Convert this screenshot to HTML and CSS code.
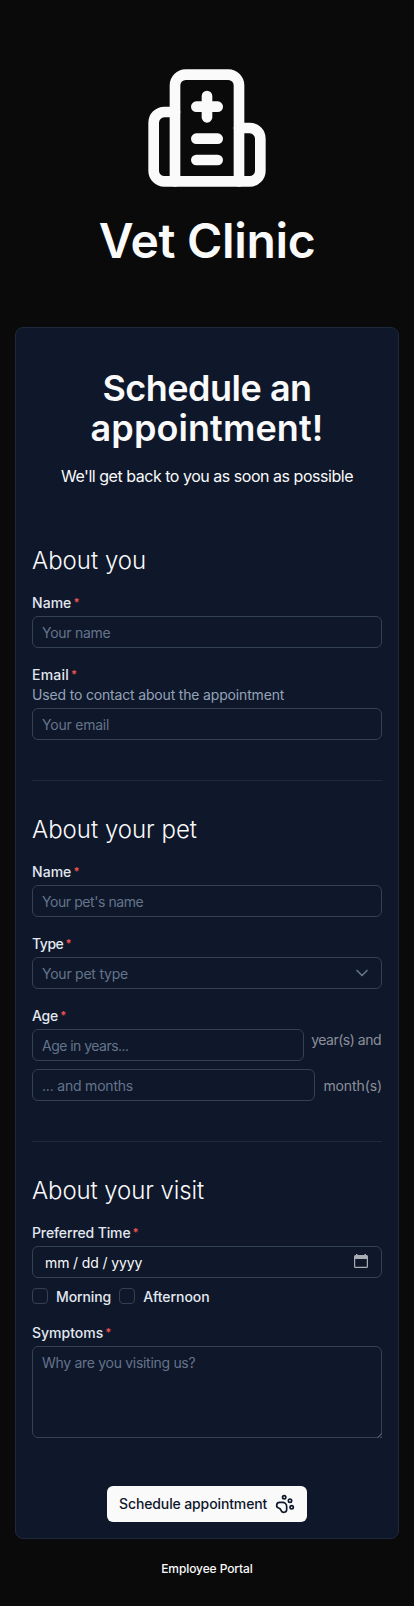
FILE: index.html
```html
<!DOCTYPE html>
<html lang="en">
<head>
<meta charset="utf-8">
<meta name="viewport" content="width=device-width, initial-scale=1">
<title>Vet Clinic</title>
<link rel="stylesheet" href="styles.css">
</head>
<body>
<header class="brand">
  <svg class="brand-icon" viewBox="0 0 24 24"><path d="M12 6v4"/><path d="M14 14h-4"/><path d="M14 18h-4"/><path d="M14 8h-4"/><path d="M18 12h2a2 2 0 0 1 2 2v6a2 2 0 0 1-2 2H4a2 2 0 0 1-2-2v-9a2 2 0 0 1 2-2h2"/><path d="M18 22V4a2 2 0 0 0-2-2H8a2 2 0 0 0-2 2v18"/></svg>
  <h1 class="brand-name">Vet Clinic</h1>
</header>
<main class="card">
  <div class="card-head">
    <h2 class="card-title"><span class="title-first">Schedule an</span> <span class="title-second">appointment!</span></h2>
    <p class="card-text">We'll get back to you as soon as possible</p>
  </div>
  <form class="form">
    <section class="section">
      <h3 class="section-title">About you</h3>
      <div class="field">
        <label class="label label-name" for="name">Name<span class="star">*</span></label>
        <input class="control ph-name" id="name" placeholder="Your name">
      </div>
      <div class="field">
        <label class="label label-email" for="email">Email<span class="star">*</span></label>
        <p class="hint">Used to contact about the appointment</p>
        <input class="control ph-email" id="email" placeholder="Your email">
      </div>
    </section>
    <section class="section divided">
      <h3 class="section-title">About your pet</h3>
      <div class="field">
        <label class="label label-name" for="pet">Name<span class="star">*</span></label>
        <input class="control ph-pet" id="pet" placeholder="Your pet's name">
      </div>
      <div class="field">
        <label class="label label-type">Type<span class="star">*</span></label>
        <div class="control select">
          <span class="select-text">Your pet type</span>
          <svg class="chevron" viewBox="0 0 24 24"><path d="m6 9 6 6 6-6"/></svg>
        </div>
      </div>
      <div class="field">
        <label class="label label-age" for="years">Age<span class="star">*</span></label>
        <div class="age-row years">
          <input class="control ph-years" id="years" placeholder="Age in years...">
          <span class="unit unit-years">year(s) and</span>
        </div>
        <div class="age-row months">
          <input class="control ph-months" placeholder="... and months">
          <span class="unit unit-months">month(s)</span>
        </div>
      </div>
    </section>
    <section class="section divided">
      <h3 class="section-title visit-title">About your visit</h3>
      <div class="field">
        <label class="label label-time">Preferred Time<span class="star">*</span></label>
        <div class="control date">
          <span class="date-text">mm / dd / yyyy</span>
          <svg class="calendar" viewBox="0 0 14 14"><path fill-rule="evenodd" d="M2 1V0h1.500v1h7V0H12v1h.5A1.500 1.500 0 0 1 14 2.500v10A1.500 1.500 0 0 1 12.500 14h-11A1.500 1.500 0 0 1 0 12.500v-10A1.500 1.500 0 0 1 1.500 1ZM1.200 5v7.300a.5.5 0 0 0 .5.5h10.600a.5.5 0 0 0 .5-.5V5Z"/></svg>
        </div>
        <div class="checks">
          <label class="check check-morning"><span class="box"></span>Morning</label>
          <label class="check"><span class="box"></span>Afternoon</label>
        </div>
      </div>
      <div class="field">
        <label class="label" for="symptoms">Symptoms<span class="star">*</span></label>
        <div class="area-wrap">
          <textarea class="control area" id="symptoms" placeholder="Why are you visiting us?"></textarea>
          <svg class="grip" viewBox="0 0 5 5"><path d="M.5 5 5 .5M3.500 5 5 3.500"/></svg>
        </div>
      </div>
    </section>
    <button class="submit" type="button">Schedule appointment
      <svg class="paw" viewBox="0 0 24 24"><circle cx="11" cy="4" r="2"/><circle cx="18" cy="8" r="2"/><circle cx="20" cy="16" r="2"/><path d="M9 10a5 5 0 0 1 5 5v3.500a3.500 3.500 0 0 1-6.840 1.045Q6.520 17.480 4.460 16.840A3.500 3.500 0 0 1 5.500 10Z"/></svg>
    </button>
  </form>
</main>
<footer class="footer"><a class="portal">Employee Portal</a></footer>
</body>
</html>
```
FILE: styles.css
```css
* { box-sizing: border-box; margin: 0; padding: 0; }
body {
  background: #0a0a0a;
  color: #fafafa;
  font: 400 14px/20px Inter, sans-serif;
  min-height: 1606px;
}
svg { display: block; fill: none; stroke: currentColor; stroke-width: 2; stroke-linecap: round; stroke-linejoin: round; }

.brand { display: flex; flex-direction: column; align-items: center; gap: 25px; padding: 64px 0 62px; }
.brand-icon { width: 128px; height: 128px; }
.brand-name { font-size: 48px; line-height: 48px; font-weight: 600; letter-spacing: -.33px; }

.card { width: 384px; margin: 0 auto; padding: 0 16px 16px; background: #0f172a; border: 1px solid #1e293b; border-radius: 8px; }
.card-head { padding: 40px 0 56px; text-align: center; }
.card-title { display: flex; flex-direction: column; font-size: 36px; line-height: 40px; font-weight: 600; }
.title-first { letter-spacing: -.5px; }
.title-second { letter-spacing: .1px; }
.card-text { margin-top: 16px; font-size: 16px; line-height: 24px; letter-spacing: -.47px; }

.form { display: flex; flex-direction: column; }
.section { display: flex; flex-direction: column; gap: 17px; }
.divided { margin-top: 40px; padding-top: 32px; border-top: 1px solid #1e293b; }
.section-title { height: 32px; font-size: 24px; line-height: 34px; font-weight: 300; }
.visit-title { letter-spacing: -.1px; }

.field { display: flex; flex-direction: column; }
.label { display: flex; height: 20px; margin-bottom: 3px; color: #e2e8f0; font-weight: 500; }
.label-name { letter-spacing: .05px; }
.label-email { letter-spacing: .2px; }
.label-type { letter-spacing: -.45px; }
.label-age { letter-spacing: -.2px; }
.label-time { letter-spacing: -.12px; }
.star { margin-left: 2px; color: #ef5350; font-size: 11px; font-weight: 700; line-height: 19px; letter-spacing: 0; }
.hint { margin: -3px 0 3px; color: #94a3b8; letter-spacing: -.17px; }

.control { width: 100%; height: 32px; padding: 1px 9px 0; border: 1px solid #334155; border-radius: 6px; background: transparent; color: #fafafa; font: inherit; outline: 0; }
.control::placeholder { color: #64748b; opacity: 1; }
.ph-name { letter-spacing: -.27px; }
.ph-email { letter-spacing: -.22px; }
.ph-pet { letter-spacing: -.43px; }
.ph-years { letter-spacing: -.53px; }
.ph-months { letter-spacing: -.2px; }
.select { display: flex; align-items: center; justify-content: space-between; color: #64748b; letter-spacing: -.24px; }
.chevron { width: 20px; height: 20px; margin-top: -1px; color: #64748b; }

.age-row { display: flex; justify-content: space-between; }
.years .control { width: 272px; }
.months { margin-top: 8px; align-items: center; }
.months .control { width: 283px; }
.unit { color: #8b909c; }
.unit-years { padding: 1px 1px 0 0; letter-spacing: -.5px; }
.unit-months { padding-top: 1px; letter-spacing: -.1px; }

.date { display: flex; align-items: center; justify-content: space-between; padding: 1px 13px 0 12px; letter-spacing: -.13px; }
.calendar { width: 14px; height: 14px; margin-bottom: 3px; fill: #a9acb3; stroke: none; }
.checks { display: flex; gap: 8px; height: 19px; margin-top: 9px; }
.check { display: flex; gap: 8px; color: #e2e8f0; font-weight: 500; letter-spacing: -.05px; }
.check-morning { letter-spacing: -.1px; }
.box { width: 16px; height: 16px; margin-top: 1px; border: 1px solid #334155; border-radius: 4px; }
.area-wrap { position: relative; }
.area { display: block; height: 92px; padding: 6px 9px; letter-spacing: -.3px; resize: none; }
.grip { position: absolute; right: 0; bottom: 0; width: 5px; height: 5px; color: #7b8392; stroke-width: .8; }

.submit { display: flex; align-items: center; align-self: center; justify-content: space-between; width: 200px; height: 36px; margin-top: 48px; padding: 0 12px; border: 0; border-radius: 6px; background: #fafafa; color: #0f172a; font: 500 14px/20px Inter, sans-serif; letter-spacing: -.12px; }
.paw { width: 20px; height: 20px; }

.footer { padding-top: 22px; text-align: center; }
.portal { display: block; font-size: 12px; line-height: 16px; font-weight: 500; letter-spacing: -.1px; }
```
